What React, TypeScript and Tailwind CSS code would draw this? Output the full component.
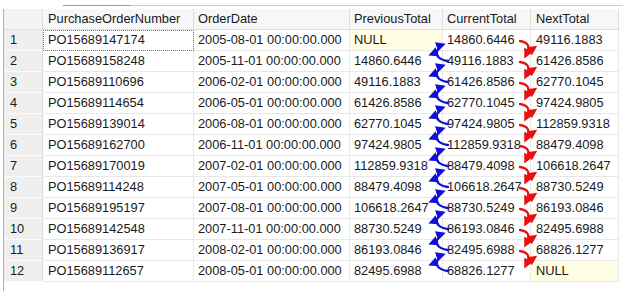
import React from "react";

const rows: string[][] = [
  ["PO15689147174", "2005-08-01 00:00:00.000", "NULL", "14860.6446", "49116.1883"],
  ["PO15689158248", "2005-11-01 00:00:00.000", "14860.6446", "49116.1883", "61426.8586"],
  ["PO15689110696", "2006-02-01 00:00:00.000", "49116.1883", "61426.8586", "62770.1045"],
  ["PO15689114654", "2006-05-01 00:00:00.000", "61426.8586", "62770.1045", "97424.9805"],
  ["PO15689139014", "2006-08-01 00:00:00.000", "62770.1045", "97424.9805", "112859.9318"],
  ["PO15689162700", "2006-11-01 00:00:00.000", "97424.9805", "112859.9318", "88479.4098"],
  ["PO15689170019", "2007-02-01 00:00:00.000", "112859.9318", "88479.4098", "106618.2647"],
  ["PO15689114248", "2007-05-01 00:00:00.000", "88479.4098", "106618.2647", "88730.5249"],
  ["PO15689195197", "2007-08-01 00:00:00.000", "106618.2647", "88730.5249", "86193.0846"],
  ["PO15689142548", "2007-11-01 00:00:00.000", "88730.5249", "86193.0846", "82495.6988"],
  ["PO15689136917", "2008-02-01 00:00:00.000", "86193.0846", "82495.6988", "68826.1277"],
  ["PO15689112657", "2008-05-01 00:00:00.000", "82495.6988", "68826.1277", "NULL"],
];

const headers = ["PurchaseOrderNumber", "OrderDate", "PreviousTotal", "CurrentTotal", "NextTotal"];

function Arrows() {
  const bounds = Array.from({ length: 11 }, (_, i) => 30 + 21 * (i + 1));
  const blue = "#1010d8";
  const red = "#e81010";
  return (
    <svg className="absolute left-0 top-0 pointer-events-none" width="628" height="294" viewBox="0 0 628 294">
      <defs>
        <marker id="mb" viewBox="0 0 10 10" refX="6" refY="5" markerWidth="4.2" markerHeight="4.2" orient="auto">
          <path d="M0,0 L10,5 L0,10 z" fill={blue} />
        </marker>
        <marker id="mr" viewBox="0 0 10 10" refX="6" refY="5" markerWidth="4.2" markerHeight="4.2" orient="auto">
          <path d="M0,0 L10,5 L0,10 z" fill={red} />
        </marker>
      </defs>
      {bounds.map((b) => (
        <g key={b} fill="none" strokeWidth="2.3" strokeLinecap="round">
          <path d={`M448 ${b + 10} Q435 ${b + 8} 437 ${b} Q439 ${b - 5} 442 ${b - 6}`} stroke={blue} markerEnd="url(#mb)" />
          <path d={`M437 ${b + 1} L432 ${b + 3}`} stroke={blue} markerEnd="url(#mb)" />
          <path d={`M520 ${b - 10} Q532 ${b - 8} 527 ${b + 2} L526 ${b + 4}`} stroke={red} markerEnd="url(#mr)" />
          <path d={`M528 ${b + 1} L534 ${b - 3}`} stroke={red} markerEnd="url(#mr)" />
        </g>
      ))}
    </svg>
  );
}

export default function App() {
  const font = { fontFamily: '"Liberation Sans", Arial, sans-serif' };
  return (
    <div className="relative w-[628px] h-[294px] bg-white overflow-hidden text-[12.8px] text-[#1a1a1a]" style={font}>
      <div className="pt-[5px] flex">
        <div className="ml-[63px] w-[68px] h-px bg-[#9c9c9c]" />
        <div className="w-[492px] h-px bg-[#cdcdcd]" />
      </div>
      <div className="ml-[3px] mt-[3px] h-[282px] border-l border-[#b4b4b4]">
        <div className="grid grid-cols-[39px_151px_156px_93px_88px_88px] auto-rows-[21px] w-[615px]">
          <div className="bg-[#f3f3f3] border-r border-b border-[#dedede]" />
          {headers.map((h, i) => (
            <div
              key={h}
              className={`bg-[#f7f7f7] border-r border-b border-[#dedede] flex items-center whitespace-nowrap overflow-hidden ${i === 0 ? "pl-[5px]" : i === 4 ? "pl-[5px]" : "pl-[4px]"}`}
            >
              {h}
            </div>
          ))}
          {rows.map((r, ri) => (
            <React.Fragment key={ri}>
              <div className="bg-[#efefef] border-r border-[#dcdcdc] border-b border-b-[#fbfbfb] flex items-center pl-[6px]">
                {ri + 1}
              </div>
              {r.map((c, ci) => {
                const isNull = c === "NULL";
                const selected = ri === 0 && ci === 0;
                return (
                  <div
                    key={ci}
                    className={`border-r border-b border-[#e8e8e8] flex items-center whitespace-nowrap overflow-hidden ${
                      isNull ? "bg-[#fffde2]" : "bg-white"
                    } ${ci === 0 || ci === 4 ? "pl-[5px]" : "pl-[4px]"} ${
                      selected ? "outline-1 outline-dotted outline-[#7a7a7a] -outline-offset-1" : ""
                    }`}
                  >
                    {c}
                  </div>
                );
              })}
            </React.Fragment>
          ))}
        </div>
      </div>
      <Arrows />
    </div>
  );
}
